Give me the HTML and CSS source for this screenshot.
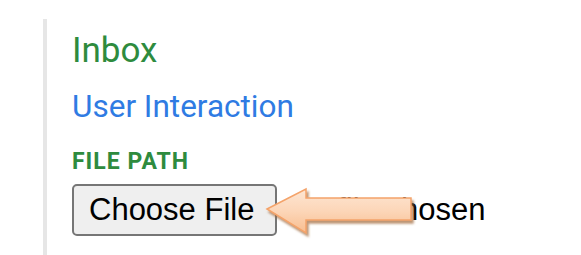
FILE: index.html
```html
<!DOCTYPE html>
<html>
<head>
<meta charset="utf-8">
<link rel="stylesheet" href="styles.css">
</head>
<body>
<div class="panel">
  <div class="title">Inbox</div>
  <div class="subtitle">User Interaction</div>
  <div class="label">FILE PATH</div>
  <div class="file-row">
    <button class="file-btn" type="button">Choose File</button>
    <span class="file-status">No file chosen</span>
    <svg class="arrow" width="154" height="56" viewBox="0 0 154 56" aria-hidden="true">
      <defs>
        <linearGradient id="ag" x1="0" y1="0" x2="0" y2="1">
          <stop offset="0" stop-color="#fde6d3"/>
          <stop offset="0.5" stop-color="#fcd6b8"/>
          <stop offset="1" stop-color="#f8bd8f"/>
        </linearGradient>
        <filter id="sh" x="-10%" y="-20%" width="130%" height="150%">
          <feGaussianBlur in="SourceAlpha" stdDeviation="1.2"/>
          <feOffset dx="1.5" dy="2.5" result="b"/>
          <feFlood flood-color="#a0683a" flood-opacity="0.7"/>
          <feComposite in2="b" operator="in"/>
          <feMerge><feMergeNode/><feMergeNode in="SourceGraphic"/></feMerge>
        </filter>
      </defs>
      <path d="M4 24 L43 4 L43 13 L148 13 L148 35 L43 35 L43 48 Z" fill="url(#ag)" stroke="#f4a36a" stroke-width="1.5" stroke-linejoin="miter" filter="url(#sh)"/>
    </svg>
  </div>
</div>
</body>
</html>
```
FILE: styles.css
```css
html, body {
  margin: 0;
  padding: 0;
  background: #ffffff;
}
body {
  width: 581px;
  height: 255px;
  overflow: hidden;
  padding-top: 19px;
  box-sizing: border-box;
}
.panel {
  margin-left: 43px;
  border-left: 4px solid #e6e6e6;
  padding-left: 25px;
  height: 236px;
  box-sizing: border-box;
  font-family: Roboto, "Noto Sans", sans-serif;
}
.title {
  color: #2e8b3e;
  font-size: 35px;
  line-height: 40px;
  padding-top: 12px;
}
.subtitle {
  color: #2f7be3;
  font-size: 31.5px;
  line-height: 36px;
  margin-top: 18px;
}
.label {
  color: #2e8b3e;
  font-size: 23px;
  font-weight: 700;
  letter-spacing: 1px;
  line-height: 28px;
  margin-top: 23px;
}
.file-row {
  position: relative;
  display: flex;
  align-items: center;
  gap: 12px;
  margin-top: 8px;
  font-family: "Liberation Sans", Arial, sans-serif;
  font-size: 31px;
  color: #000000;
}
.file-btn {
  font-family: "Liberation Sans", Arial, sans-serif;
  font-size: 31px;
  color: #000000;
  background: #efefef;
  border: 2px solid #767676;
  border-radius: 5px;
  width: 205px;
  height: 52px;
  padding: 0 0 0 15px;
  text-align: left;
  margin: 0;
}
.file-status {
  white-space: nowrap;
}
.arrow {
  position: absolute;
  left: 191px;
  top: 1px;
}
```
